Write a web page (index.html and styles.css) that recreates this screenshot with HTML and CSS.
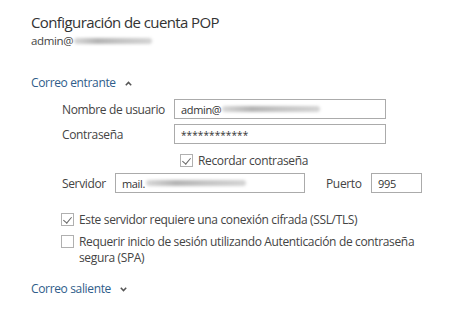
FILE: index.html
```html
<!DOCTYPE html>
<html lang="es">
<head>
  <meta charset="UTF-8" />
  <title>Configuración de cuenta POP</title>
  <link rel="stylesheet" href="styles.css">
</head>
<body>
  <div class="page">
    <h1 class="title">Configuración de cuenta POP</h1>
    <div class="account">admin@<span class="blur blur-account"></span></div>

    <div class="section-head">
      <span>Correo entrante</span>
      <svg class="chevron" width="7" height="5" viewBox="0 0 7 5"><path d="M0.8 4.2 L3.5 1.4 L6.2 4.2" fill="none" stroke="#555" stroke-width="1.5"/></svg>
    </div>

    <div class="creds">
      <div class="field">
        <label>Nombre de usuario</label>
        <div class="input wide">admin@<span class="blur blur-user"></span></div>
      </div>
      <div class="field">
        <label>Contraseña</label>
        <div class="input wide pass">************</div>
      </div>
      <div class="check remember">
        <span class="box checked"></span>
        <span>Recordar contraseña</span>
      </div>
    </div>

    <div class="server-row">
      <label>Servidor</label>
      <div class="input server">mail.<span class="blur blur-server"></span></div>
      <label class="port-label">Puerto</label>
      <div class="input port">995</div>
    </div>

    <div class="options">
      <div class="check">
        <span class="box checked"></span>
        <span>Este servidor requiere una conexión cifrada (SSL/TLS)</span>
      </div>
      <div class="check">
        <span class="box"></span>
        <span>Requerir inicio de sesión utilizando Autenticación de contraseña segura (SPA)</span>
      </div>
    </div>

    <div class="section-head outgoing">
      <span>Correo saliente</span>
      <svg class="chevron" width="7" height="5" viewBox="0 0 7 5"><path d="M0.8 0.8 L3.5 3.6 L6.2 0.8" fill="none" stroke="#555" stroke-width="1.5"/></svg>
    </div>
  </div>
</body>
</html>
```

FILE: styles.css
```css
body {
  margin: 0;
  background-color: #ffffff;
  color: #444444;
  font-family: "Open Sans", "Noto Sans", sans-serif;
  letter-spacing: -0.35px;
}

.page {
  padding: 10px 0 0 31px;
}

.title {
  margin: 0;
  font-size: 15px;
  font-weight: normal;
  color: #333333;
  line-height: 24px;
  letter-spacing: -0.6px;
}

.account {
  font-size: 11.5px;
  line-height: 16px;
  margin-top: -1px;
  color: #444444;
  display: flex;
  align-items: center;
}

.blur {
  display: inline-block;
  height: 6px;
  border-radius: 3px;
  filter: blur(1.6px);
  background: linear-gradient(90deg, #d8d8d8, #b4b4b4 30%, #c4c4c4 60%, #d4d4d4);
}

.blur-account {
  width: 78px;
  margin-left: 1px;
}

.blur-user {
  width: 98px;
  margin-left: 1px;
}

.blur-server {
  width: 100px;
  margin-left: 1px;
}

.section-head {
  margin-top: 26px;
  font-size: 12px;
  line-height: 16px;
  color: #2f5d8a;
  display: flex;
  align-items: center;
  gap: 9px;
}

.chevron {
  display: block;
}

.creds {
  margin-top: 8px;
  padding-left: 31px;
  display: flex;
  flex-direction: column;
  gap: 5px;
}

.field {
  display: flex;
  align-items: center;
}

label {
  font-size: 12px;
  color: #444444;
}

.field label {
  width: 112px;
}

.input {
  box-sizing: border-box;
  height: 20px;
  border: 1px solid #ababab;
  font-size: 11px;
  color: #333333;
  padding: 0 6px;
  display: flex;
  align-items: center;
  background-color: #ffffff;
}

.wide {
  width: 212px;
}

.pass {
  font-size: 10px;
  letter-spacing: 0.1px;
  padding-top: 2px;
}

.check {
  display: flex;
  align-items: flex-start;
  gap: 5px;
  font-size: 12px;
  line-height: 16px;
  color: #444444;
}

.box {
  box-sizing: border-box;
  flex: none;
  width: 13px;
  height: 13px;
  margin-top: 1px;
  border: 1px solid #b0b0b0;
  position: relative;
}

.box.checked::after {
  content: "";
  position: absolute;
  left: 3px;
  top: 1px;
  width: 4px;
  height: 7px;
  border-right: 1.3px solid #666666;
  border-bottom: 1.3px solid #666666;
  transform: rotate(40deg);
}

.remember {
  margin-left: 118px;
  margin-top: 4px;
}

.server-row {
  margin-top: 4px;
  padding-left: 31px;
  display: flex;
  align-items: center;
}

.server-row label {
  width: 53px;
}

.server {
  width: 190px;
}

.port-label {
  margin-left: 21px;
}

.server-row .port-label {
  width: 45px;
}

.port {
  width: 51px;
}

.options {
  margin-top: 19px;
  padding-left: 30px;
  display: flex;
  flex-direction: column;
  gap: 6px;
}

.options .check span:last-child {
  width: 350px;
}

.outgoing {
  margin-top: 15px;
}
```
